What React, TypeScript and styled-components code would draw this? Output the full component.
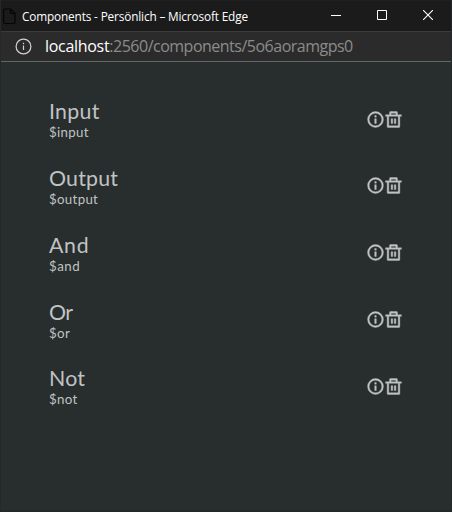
import React from "react";
import styled, { createGlobalStyle } from "styled-components";

const GlobalStyle = createGlobalStyle`
  * { box-sizing: border-box; }
  body { margin: 0; background: #282d2d; }
`;

const Window = styled.div`
  width: 452px;
  height: 512px;
  display: flex;
  flex-direction: column;
  overflow: hidden;
  background: #282d2d;
  border: 1px solid #232828;
  border-bottom-width: 2px;
  border-top-color: #202020;
`;

const TitleBar = styled.header`
  height: 30px;
  flex: none;
  display: flex;
  align-items: center;
  padding-left: 2px;
  background: #1b1b1b;
`;

const Title = styled.h1`
  margin: 0 auto 0 6px;
  font: 400 11.8px/16px "Open Sans", "Noto Sans", sans-serif;
  letter-spacing: -0.15px;
  color: #fff;
  white-space: nowrap;
`;

const WindowButton = styled.button`
  width: 46px;
  height: 28px;
  padding: 0;
  border: 0;
  background: none;
  color: #fff;
  display: flex;
  align-items: center;
  justify-content: center;
`;

const Controls = styled.div`
  display: flex;
  align-self: flex-start;
`;

const AddressBar = styled.div`
  height: 31px;
  flex: none;
  display: flex;
  align-items: center;
  gap: 13px;
  padding-left: 14px;
  background: #2b2b2b;
  border-top: 1px solid #3b3b3b;
  border-bottom: 1px solid #636666;
`;

const Url = styled.div`
  margin-top: -1px;
  font: 400 16px/22px "Open Sans", "Noto Sans", sans-serif;
  color: #8b8b8b;
  white-space: nowrap;
`;

const UrlPart = styled.span<{ $spacing: number }>`
  letter-spacing: ${(p) => p.$spacing}px;
`;

const Host = styled(UrlPart)`
  color: #fff;
`;

const List = styled.ul`
  margin: 0;
  padding: 24.5px 48px 0 48px;
  list-style: none;
`;

const Item = styled.li`
  height: 66.75px;
  display: flex;
  align-items: center;
  justify-content: space-between;
`;

const Labels = styled.div`
  display: flex;
  flex-direction: column;
  font-family: Lato, sans-serif;
  color: #c0c3c4;
`;

const Name = styled.span<{ $spacing: number }>`
  font-size: 21.3px;
  line-height: 25px;
  letter-spacing: ${(p) => p.$spacing}px;
`;

const Identifier = styled.span<{ $spacing: number }>`
  font-size: 13.3px;
  line-height: 16px;
  letter-spacing: ${(p) => p.$spacing}px;
`;

const Actions = styled.div`
  display: flex;
  margin-top: -1.4px;
  color: #c0c3c3;

  svg + svg {
    margin-left: -1px;
  }
`;

const FileIcon = () => (
  <svg width="13" height="17" viewBox="0 0 13 17" fill="none" stroke="#050505" strokeWidth="1.2">
    <path d="M2 1h5.5L12 5.5V14a1.5 1.5 0 0 1-1.5 1.5H2A1.5 1.5 0 0 1 .6 14V2.5A1.5 1.5 0 0 1 2 1zM7.5 1v4.5H12" />
  </svg>
);

const SiteInfoIcon = () => (
  <svg width="17" height="17" viewBox="0 0 17 17" fill="none" stroke="#d2d2d2" strokeWidth="1.2">
    <circle cx="8.5" cy="8.5" r="7.4" />
    <path d="M8.5 7.5v4.5M8.5 4.8v1.4" />
  </svg>
);

const InfoIcon = () => (
  <svg width="19" height="19" viewBox="0 0 24 24" fill="currentColor" stroke="currentColor" strokeWidth="0.5">
    <path d="M11 7h2v2h-2zm0 4h2v6h-2zm1-9a10 10 0 1 0 0 20 10 10 0 0 0 0-20zm0 18a8 8 0 1 1 0-16 8 8 0 0 1 0 16z" />
  </svg>
);

const TrashIcon = () => (
  <svg width="19" height="19" viewBox="0 0 24 24" fill="currentColor" stroke="currentColor" strokeWidth="0.5">
    <path d="M17 6h5v2h-2v13a1 1 0 0 1-1 1H5a1 1 0 0 1-1-1V8H2V6h5V3a1 1 0 0 1 1-1h8a1 1 0 0 1 1 1zm1 2H6v12h12zM9 11h2v6H9zm4 0h2v6h-2zM9 4v2h6V4z" />
  </svg>
);

const components = [
  { name: "Input", id: "$input", nameSpacing: 0.3, idSpacing: 0.32 },
  { name: "Output", id: "$output", nameSpacing: 0.2, idSpacing: 0.3 },
  { name: "And", id: "$and", nameSpacing: 0.7, idSpacing: 0.5 },
  { name: "Or", id: "$or", nameSpacing: -0.6, idSpacing: 0.4 },
  { name: "Not", id: "$not", nameSpacing: 0.2, idSpacing: 0.35 },
];

export default function App() {
  return (
    <Window>
      <GlobalStyle />
      <TitleBar>
        <FileIcon />
        <Title>Components - Persönlich – Microsoft Edge</Title>
        <Controls>
          <WindowButton aria-label="Minimize">
            <svg width="10" height="10" stroke="currentColor"><path d="M0 5.5h10" /></svg>
          </WindowButton>
          <WindowButton aria-label="Maximize">
            <svg width="10" height="10" fill="none" stroke="currentColor"><path d="M.5.5h9v9h-9z" /></svg>
          </WindowButton>
          <WindowButton aria-label="Close">
            <svg width="10" height="10" stroke="currentColor" strokeWidth="1.1"><path d="M0 0l10 10M10 0L0 10" /></svg>
          </WindowButton>
        </Controls>
      </TitleBar>
      <AddressBar>
        <SiteInfoIcon />
        <Url>
          <Host $spacing={-0.3}>localhost</Host>
          <UrlPart $spacing={-0.5}>:2560/components/5o6aoramgps0</UrlPart>
        </Url>
      </AddressBar>
      <List>
        {components.map((c) => (
          <Item key={c.id}>
            <Labels>
              <Name $spacing={c.nameSpacing}>{c.name}</Name>
              <Identifier $spacing={c.idSpacing}>{c.id}</Identifier>
            </Labels>
            <Actions>
              <InfoIcon />
              <TrashIcon />
            </Actions>
          </Item>
        ))}
      </List>
    </Window>
  );
}
